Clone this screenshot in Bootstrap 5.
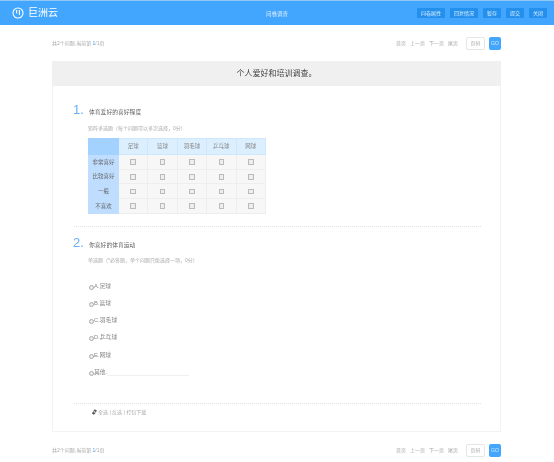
<!DOCTYPE html>
<html lang="zh">
<head>
<meta charset="utf-8">
<title>问卷调查</title>
<link href="https://cdn.jsdelivr.net/npm/bootstrap@5.3.0/dist/css/bootstrap.min.css" rel="stylesheet">
<style>
html,body{height:462px;overflow:hidden;background:#fff}
body{font-family:"Liberation Sans","Noto Sans CJK SC",sans-serif;font-size:5px;line-height:1.2;color:#999;filter:blur(.3px)}
.topbar{height:25px;background:#42a6ff;border-top:1px solid #8fc8f5;padding:0 7px 0 12px}
.brand{gap:4px;color:#fff;font-size:10px;font-weight:400;width:253px}
.top-title{color:#d6ecff;font-size:5.5px;position:absolute;left:0;right:0;top:10px;text-align:center;pointer-events:none}
.tb-row{gap:5px}
.tb{background:#2490ee;color:#d8eeff;font-size:5px;height:10px;line-height:10px;padding:0 4px;border-radius:1px;border:0}
.wrap{width:449px;margin-left:52px}
.pager{height:36px;color:#aaa}
.pager em{font-style:normal;color:#42a6ff}
.pg{gap:4px;color:#aaa;margin-right:8px}
.ipt{width:19px;height:13px;border:1px solid #e6e6e6;border-radius:2px;font-size:5px;color:#aaa;line-height:11px;text-align:center;margin-right:4px}
.go{width:12px;height:13px;background:#42a6ff;color:#d6ecff;border-radius:2px;font-size:5px;line-height:13px;text-align:center}
.sheet{height:371px;border:1px solid #f3f3f3;border-top:0}
.sheet-head{height:25px;background:#f0f0f0;margin:0 -1px;color:#444;font-size:8px;line-height:25px;text-align:center}
.qhead{gap:3px;padding-left:20px}
.qnum{font-size:13px;line-height:15px;color:#6ab0f5;width:13px}
.qtxt{font-size:5.8px;color:#666;padding-top:7px}
.qnote{color:#aaa;font-size:5px;margin:7.5px 0 0 35px}
.mtx{margin:7.5px 0 0 35px;border-collapse:collapse;table-layout:fixed;width:178px}
.mtx td,.mtx th{border:1px solid #eee;background:#f7f7f7;height:14.7px;padding:0;text-align:center;font-weight:400;font-size:5.5px;color:#888;width:29.4px}
.mtx tr:first-child th{height:16px;background:#dcefff;border-color:#cfe7fd}
.mtx th.side{background:#bfdeff;border-color:#bfdeff;color:#666;width:30px}
.mtx tr:first-child th.side{background:#a3d2ff;border-color:#a3d2ff}
.box{display:inline-block;width:5.5px;height:5.5px;border:1px solid #bbb;background:#eee;vertical-align:middle}
.rule{border-top:1px dotted #e2e2e2;margin:0 19px 0 21px}
.rule.gap-top{margin-top:12px}
.rule.gap-low{margin-top:17px}
.opts{margin:19.5px 0 0 36px}
.opt{height:17.2px;color:#888;font-size:5.8px}
.dot{width:5px;height:5px;border:1px solid #aaa;border-radius:50%;background:#eee;margin-top:2px}
.other{width:82px;border-bottom:1px solid #f0f0f0;height:7px}
.tools{padding:5px 0 0 39px;gap:1px;color:#aaa;font-size:5px}
</style>
</head>
<body>
<div class="topbar d-flex align-items-center justify-content-between position-relative">
  <div class="brand d-flex align-items-center">
    <svg width="12" height="12" viewBox="0 0 12 12" fill="none" stroke="#fff" stroke-width="1.1"><circle cx="6" cy="6" r="5"/><path d="M4.6 3v3.6M7.4 3v5"/></svg>
    <span>巨洲云</span>
  </div>
  <div class="top-title">问卷调查</div>
  <div class="d-flex tb-row">
    <span class="tb">问卷属性</span><span class="tb">回复情况</span><span class="tb">暂存</span><span class="tb">提交</span><span class="tb">关闭</span>
  </div>
</div>
<div class="wrap">
  <div class="pager d-flex align-items-center justify-content-between">
    <span>共2个问题,当前第 <em>1</em>/1页</span>
    <div class="d-flex align-items-center"><div class="pg d-flex"><span>首页</span><span>上一页</span><span>下一页</span><span>尾页</span></div><div class="ipt">页码</div><div class="go">GO</div></div>
  </div>
  <div class="sheet">
    <div class="sheet-head">个人爱好和培训调查。</div>
    <div class="qhead d-flex mt-3"><div class="qnum">1.</div><div class="qtxt">体育爱好的喜好程度</div></div>
    <div class="qnote">矩阵多选题（每个问题可以多次选择，0分）</div>
    <table class="mtx">
      <tr><th class="side"></th><th>足球</th><th>篮球</th><th>羽毛球</th><th>乒乓球</th><th>网球</th></tr>
      <tr><th class="side">非常喜好</th><td><i class="box"></i></td><td><i class="box"></i></td><td><i class="box"></i></td><td><i class="box"></i></td><td><i class="box"></i></td></tr>
      <tr><th class="side">比较喜好</th><td><i class="box"></i></td><td><i class="box"></i></td><td><i class="box"></i></td><td><i class="box"></i></td><td><i class="box"></i></td></tr>
      <tr><th class="side">一般</th><td><i class="box"></i></td><td><i class="box"></i></td><td><i class="box"></i></td><td><i class="box"></i></td><td><i class="box"></i></td></tr>
      <tr><th class="side">不喜欢</th><td><i class="box"></i></td><td><i class="box"></i></td><td><i class="box"></i></td><td><i class="box"></i></td><td><i class="box"></i></td></tr>
    </table>
    <div class="rule gap-top"></div>
    <div class="qhead d-flex mt-2"><div class="qnum">2.</div><div class="qtxt">你喜好的体育运动</div></div>
    <div class="qnote">单选题（*必答题，单个问题只能选择一项，0分）</div>
    <div class="opts d-flex flex-column">
      <div class="opt d-flex"><i class="dot"></i><span>A.足球</span></div>
      <div class="opt d-flex"><i class="dot"></i><span>B.篮球</span></div>
      <div class="opt d-flex"><i class="dot"></i><span>C.羽毛球</span></div>
      <div class="opt d-flex"><i class="dot"></i><span>D.乒乓球</span></div>
      <div class="opt d-flex"><i class="dot"></i><span>E.网球</span></div>
      <div class="opt d-flex"><i class="dot"></i><span>其他.</span><div class="other"></div></div>
    </div>
    <div class="rule gap-low"></div>
    <div class="tools d-flex align-items-center">
      <svg width="5" height="6" viewBox="0 0 5 6" fill="none" stroke="#555" stroke-width="1.1"><path d="M.8 5.2 2 4M1.8 2.2 3 .9l1.2 1-1.3 1.4M3 3.8 1.8 5.1.6 4.1l1.3-1.4"/></svg>
      <span>全选 | 反选 | 打包下载</span>
    </div>
  </div>
  <div class="pager d-flex align-items-center justify-content-between">
    <span>共2个问题,当前第 <em>1</em>/1页</span>
    <div class="d-flex align-items-center"><div class="pg d-flex"><span>首页</span><span>上一页</span><span>下一页</span><span>尾页</span></div><div class="ipt">页码</div><div class="go">GO</div></div>
  </div>
</div>
<script src="https://cdn.jsdelivr.net/npm/bootstrap@5.3.0/dist/js/bootstrap.bundle.min.js"></script>
</body>
</html>
